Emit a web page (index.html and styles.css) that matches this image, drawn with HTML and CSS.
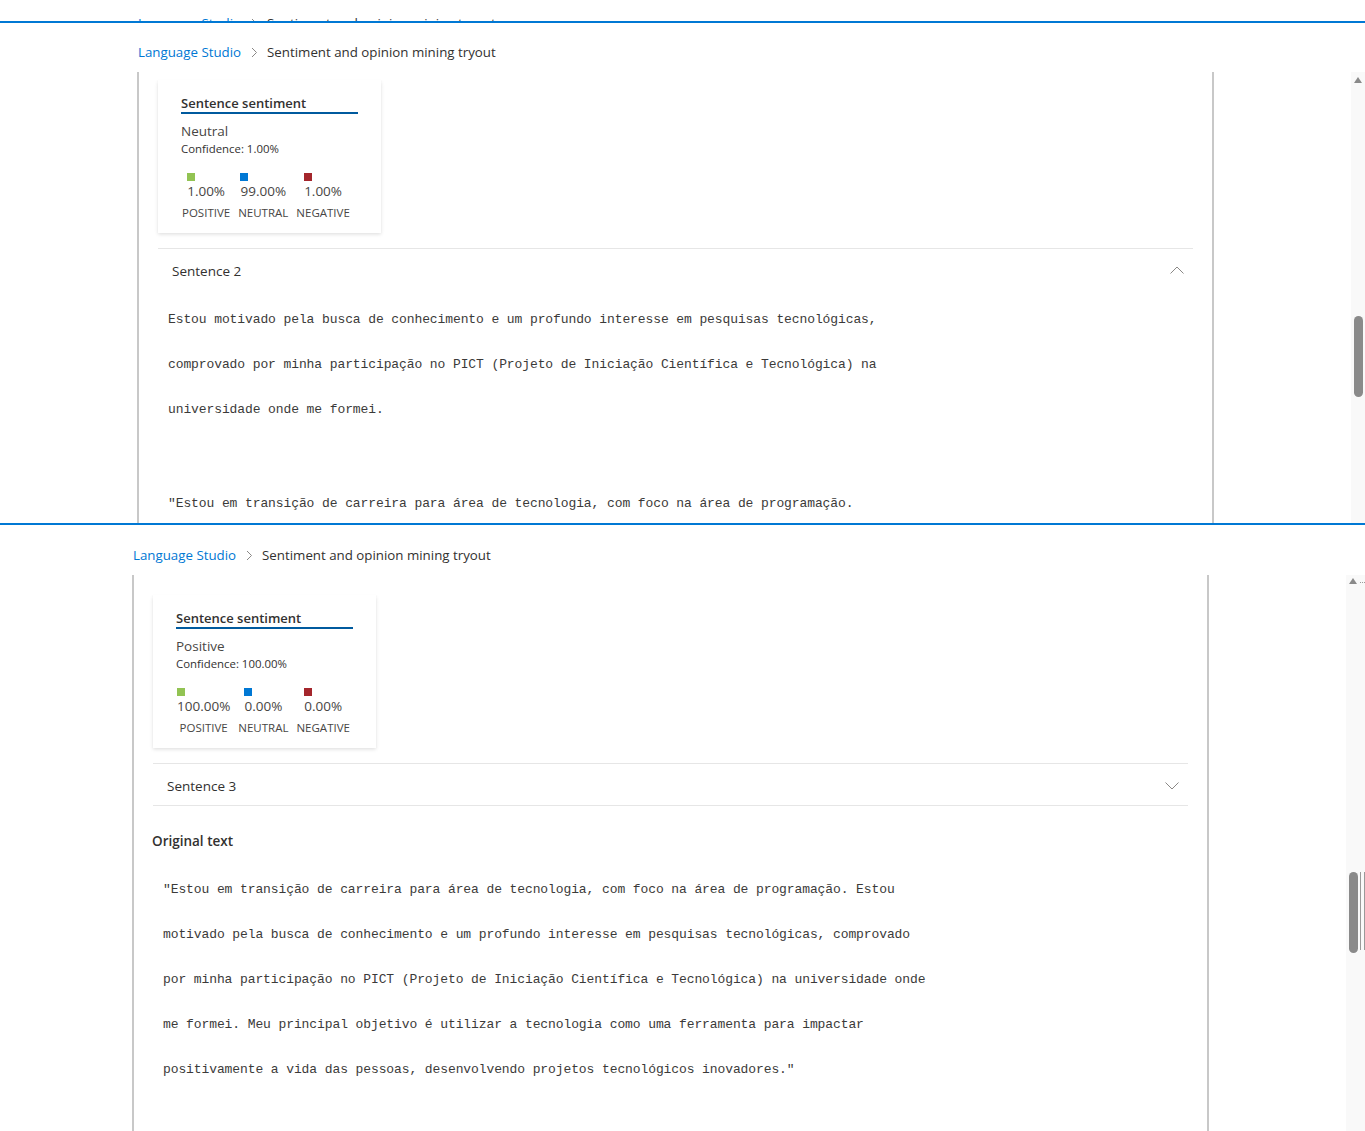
FILE: index.html
```html
<!DOCTYPE html>
<html lang="pt">
<head>
<meta charset="utf-8">
<title>Sentiment and opinion mining tryout</title>
<link rel="stylesheet" href="styles.css">
</head>
<body>

<div class="shot shot-strip">
  <nav class="crumbs">
    <a class="crumb-link">Language Studio</a>
    <svg class="crumb-sep" width="7" height="11" viewBox="0 0 7 11"><path d="M1 1l4.5 4.5L1 10" fill="none" stroke="#8a8886" stroke-width="1"/></svg>
    <span class="crumb-current">Sentiment and opinion mining tryout</span>
  </nav>
</div>

<div class="shot shot-a">
  <nav class="crumbs">
    <a class="crumb-link">Language Studio</a>
    <svg class="crumb-sep" width="7" height="11" viewBox="0 0 7 11"><path d="M1 1l4.5 4.5L1 10" fill="none" stroke="#8a8886" stroke-width="1"/></svg>
    <span class="crumb-current">Sentiment and opinion mining tryout</span>
  </nav>
  <div class="pane">
    <div class="card">
      <div class="card-title">Sentence sentiment</div>
      <div class="card-label">Neutral</div>
      <div class="card-confidence">Confidence: 1.00%</div>
      <div class="scores">
        <div class="score">
          <div class="score-value"><span class="swatch swatch-pos"></span>1.00%</div>
          <div class="score-name">POSITIVE</div>
        </div>
        <div class="score">
          <div class="score-value"><span class="swatch swatch-neu"></span>99.00%</div>
          <div class="score-name">NEUTRAL</div>
        </div>
        <div class="score">
          <div class="score-value"><span class="swatch swatch-neg"></span>1.00%</div>
          <div class="score-name">NEGATIVE</div>
        </div>
      </div>
    </div>

    <div class="acc-header acc-open">
      <span class="acc-title">Sentence 2</span>
      <svg class="acc-chevron" width="14" height="8" viewBox="0 0 14 8"><path d="M0.5 7.5L7 1l6.5 6.5" fill="none" stroke="#8a8886" stroke-width="1"/></svg>
    </div>
    <p class="mono mono-first">Estou motivado pela busca de conhecimento e um profundo interesse em pesquisas tecnológicas,<br>comprovado por minha participação no PICT (Projeto de Iniciação Científica e Tecnológica) na<br>universidade onde me formei.</p>
    <p class="mono mono-next">"Estou em transição de carreira para área de tecnologia, com foco na área de programação.</p>
  </div>
  <div class="scrollbar scrollbar-a">
    <span class="sb-arrow"></span>
    <span class="sb-thumb"></span>
  </div>
</div>

<div class="shot shot-b">
  <nav class="crumbs">
    <a class="crumb-link">Language Studio</a>
    <svg class="crumb-sep" width="7" height="11" viewBox="0 0 7 11"><path d="M1 1l4.5 4.5L1 10" fill="none" stroke="#8a8886" stroke-width="1"/></svg>
    <span class="crumb-current">Sentiment and opinion mining tryout</span>
  </nav>
  <div class="pane">
    <div class="card">
      <div class="card-title">Sentence sentiment</div>
      <div class="card-label">Positive</div>
      <div class="card-confidence">Confidence: 100.00%</div>
      <div class="scores">
        <div class="score">
          <div class="score-value"><span class="swatch swatch-pos"></span>100.00%</div>
          <div class="score-name">POSITIVE</div>
        </div>
        <div class="score">
          <div class="score-value"><span class="swatch swatch-neu"></span>0.00%</div>
          <div class="score-name">NEUTRAL</div>
        </div>
        <div class="score">
          <div class="score-value"><span class="swatch swatch-neg"></span>0.00%</div>
          <div class="score-name">NEGATIVE</div>
        </div>
      </div>
    </div>

    <div class="acc-header acc-closed">
      <span class="acc-title">Sentence 3</span>
      <svg class="acc-chevron" width="14" height="8" viewBox="0 0 14 8"><path d="M0.5 0.5L7 7l6.5-6.5" fill="none" stroke="#8a8886" stroke-width="1"/></svg>
    </div>
    <h3 class="section-title">Original text</h3>
    <p class="mono mono-orig">"Estou em transição de carreira para área de tecnologia, com foco na área de programação. Estou<br>motivado pela busca de conhecimento e um profundo interesse em pesquisas tecnológicas, comprovado<br>por minha participação no PICT (Projeto de Iniciação Científica e Tecnológica) na universidade onde<br>me formei. Meu principal objetivo é utilizar a tecnologia como uma ferramenta para impactar<br>positivamente a vida das pessoas, desenvolvendo projetos tecnológicos inovadores."</p>
  </div>
  <div class="scrollbar scrollbar-b">
    <div class="sb-col">
      <span class="sb-arrow"></span>
      <span class="sb-thumb"></span>
    </div>
    <div class="sb-extra">
      <span class="sb-dots"></span>
      <span class="sb-lines"></span>
    </div>
  </div>
</div>

</body>
</html>
```

FILE: styles.css
```css
* { box-sizing: border-box; }

html, body {
  margin: 0;
  padding: 0;
  background: #ffffff;
}

body {
  width: 1365px;
  height: 1131px;
  overflow: hidden;
  font-family: "Open Sans", "Noto Sans", "Liberation Sans", sans-serif;
  color: #323130;
}

.shot {
  overflow: hidden;
  background: #ffffff;
}

/* top clipped strip (bottom of the previous capture) */
.shot-strip {
  height: 23px;
  padding-left: 137px;
  border-bottom: 2px solid #0078d4;
}
.shot-strip .crumbs {
  padding-top: 13px;
}

/* frame A */
.shot-a {
  height: 502px;
  display: grid;
  grid-template-columns: 137px 1077px 1fr 14px;
  grid-template-rows: 49px 451px;
  border-bottom: 2px solid #0078d4;
}
.shot-a .crumbs { grid-column: 2; grid-row: 1; padding-top: 19px; }
.shot-a .pane { grid-column: 2; grid-row: 2; padding-top: 8px; }
.shot-a .scrollbar { grid-column: 4; grid-row: 2; }

/* frame B */
.shot-b {
  height: 606px;
  display: grid;
  grid-template-columns: 132px 1077px 1fr 19px;
  grid-template-rows: 50px 556px;
}
.shot-b .crumbs { grid-column: 2; grid-row: 1; padding-top: 20px; }
.shot-b .pane { grid-column: 2; grid-row: 2; padding-top: 20px; }
.shot-b .scrollbar { grid-column: 4; grid-row: 2; }

/* breadcrumb */
.crumbs {
  align-self: start;
  display: flex;
  align-items: center;
  padding-left: 1px;
  font-size: 13.3px;
  line-height: 20px;
  white-space: nowrap;
}
.crumb-link { color: #0078d4; }
.crumb-sep { margin: 0 9px 0 10px; display: block; }
.crumb-current { color: #323130; }

/* pane */
.pane {
  border-left: 2px solid #c8c8c8;
  border-right: 2px solid #c8c8c8;
  padding-left: 19px;
  padding-right: 19px;
  overflow: hidden;
}

/* sentiment card */
.card {
  width: 223px;
  padding: 14px 23px 12px 23px;
  background: #ffffff;
  box-shadow: 0 1.6px 3.6px rgba(0,0,0,0.13), 0 0.3px 0.9px rgba(0,0,0,0.11);
}
.card-title {
  font-size: 13px;
  font-weight: 600;
  line-height: 18px;
  border-bottom: 2px solid #005a9e;
  color: #323130;
}
.card-label {
  margin-top: 7px;
  font-size: 13.5px;
  line-height: 20px;
  color: #484644;
}
.card-confidence {
  font-size: 11.4px;
  line-height: 15px;
  color: #323130;
}
.scores {
  display: flex;
  gap: 8px;
  margin-top: 17px;
  padding-left: 1px;
}
.score {
  display: flex;
  flex-direction: column;
  align-items: center;
}
.score-value {
  font-size: 13.5px;
  line-height: 18px;
  color: #484644;
}
.swatch {
  display: block;
  width: 8px;
  height: 8px;
  margin-bottom: 1px;
}
.swatch-pos { background: #92c353; }
.swatch-neu { background: #0078d4; }
.swatch-neg { background: #a4262c; }
.score-name {
  margin-top: 5px;
  font-size: 11.5px;
  line-height: 16px;
  color: #484644;
}

/* accordion */
.acc-header {
  margin-top: 15px;
  display: flex;
  align-items: center;
  justify-content: space-between;
  border-top: 1px solid #e6e6e6;
  padding: 12px 9px 10px 14px;
}
.acc-closed {
  border-bottom: 1px solid #e6e6e6;
  padding-bottom: 9px;
}
.acc-title {
  font-size: 13.5px;
  line-height: 20px;
  color: #323130;
}
.acc-chevron { display: block; }
.acc-open .acc-chevron { margin-top: -3px; }
.acc-closed .acc-chevron { margin-top: -1px; }

.section-title {
  margin: 25px 0 0 -1px;
  font-size: 13.5px;
  font-weight: 600;
  line-height: 20px;
  color: #323130;
}

/* monospace text */
.mono {
  margin: 0;
  padding-left: 10px;
  font-family: "Liberation Mono", "DejaVu Sans Mono", monospace;
  font-size: 13px;
  letter-spacing: -0.1px;
  line-height: 45px;
  color: #3b3a39;
  white-space: nowrap;
}
.mono-first { margin-top: 6px; }
.mono-next { margin-top: 49px; }
.mono-orig { margin-top: 16px; padding-left: 10px; }

/* scrollbars */
.scrollbar {
  background: #f9f9f9;
}
.sb-arrow {
  display: block;
  width: 0;
  height: 0;
  border-left: 4.5px solid transparent;
  border-right: 4.5px solid transparent;
  border-bottom: 6px solid #8a8a8a;
}
.sb-thumb {
  display: block;
  width: 9px;
  height: 81px;
  border-radius: 5px;
  background: #8a8a8a;
}
.scrollbar-a { padding-left: 3px; }
.scrollbar-a .sb-arrow { margin-top: 5px; }
.scrollbar-a .sb-thumb { margin-top: 233px; }

.scrollbar-b {
  display: flex;
  padding-left: 3px;
}
.scrollbar-b .sb-col { width: 10px; }
.scrollbar-b .sb-arrow { margin-top: 3px; }
.scrollbar-b .sb-thumb { margin-top: 288px; }
.sb-extra {
  width: 6px;
  padding-left: 1px;
}
.sb-dots {
  display: block;
  margin-top: 7px;
  width: 5px;
  height: 1px;
  border-top: 1px dotted #9a9a9a;
}
.sb-lines {
  display: block;
  margin-top: 289px;
  width: 5px;
  height: 78px;
  border-left: 1px solid #9a9a9a;
  border-right: 1px solid #9a9a9a;
}
```
